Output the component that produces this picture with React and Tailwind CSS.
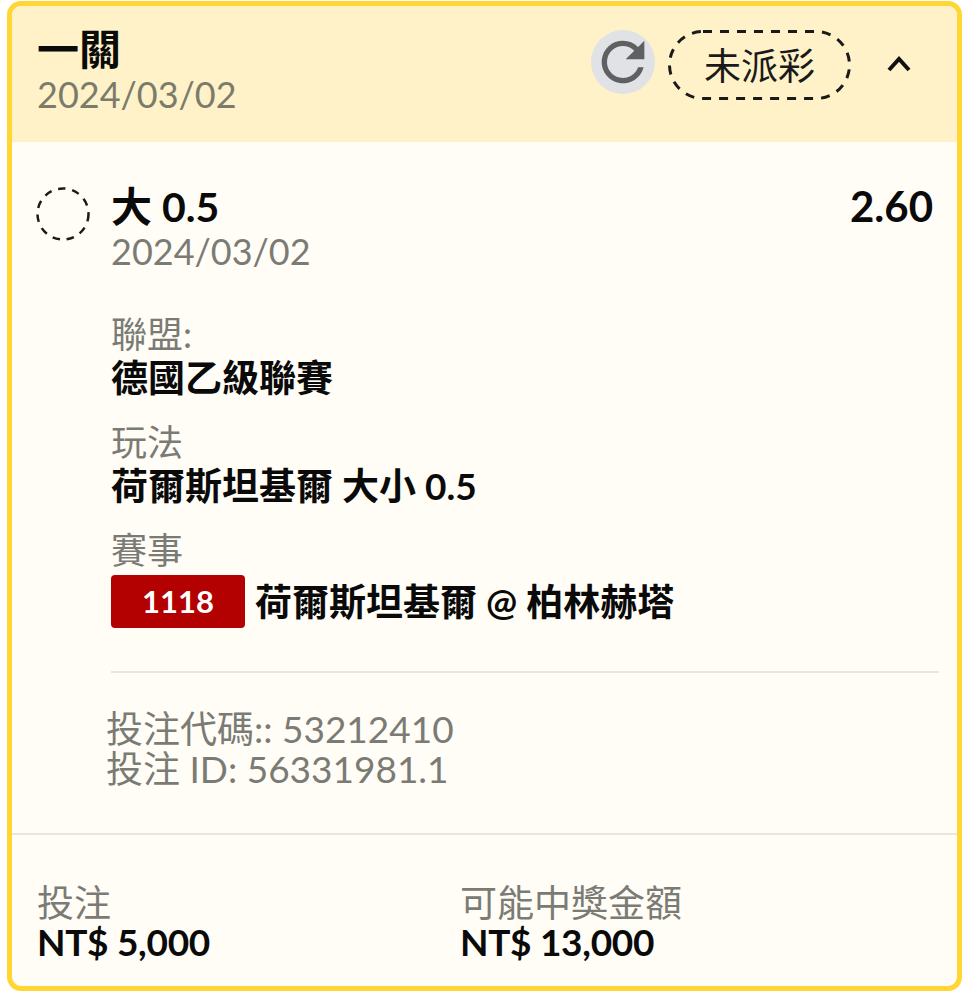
const font = "[font-family:Lato,'Noto_Sans_CJK_TC',sans-serif]"

function RefreshIcon() {
  return (
    <svg viewBox="0 0 24 24" className="w-[64px] h-[64px] fill-[#5f6061]">
      <path d="M17.65 6.35A7.96 7.96 0 0 0 12 4a8 8 0 1 0 7.74 10h-2.08A6 6 0 1 1 12 6c1.66 0 3.14.69 4.22 1.78L13 11h7V4l-2.35 2.35z" />
    </svg>
  )
}

function Chevron() {
  return (
    <svg viewBox="0 0 26 18" className="w-[26px] h-[18px] fill-none stroke-[#111] stroke-[4]">
      <path d="M3 16 L13 5 L23 16" />
    </svg>
  )
}

function Field({ label, value }) {
  return (
    <div>
      <div className="text-[36px] leading-[44px] text-[#7b7b75]">{label}</div>
      <div className="text-[37px] leading-[44px] font-bold text-[#0a0a0a]">{value}</div>
    </div>
  )
}

export default function App() {
  return (
    <div className={`w-[965px] h-[1000px] bg-white pt-[1px] pl-[7px] pr-[3px] ${font}`}>
      <div className="h-[990px] border-[5px] border-[#ffd633] rounded-[14px] bg-[#fffdf5] overflow-hidden flex flex-col">
        <div className="h-[136px] shrink-0 bg-[#fff2c8] flex justify-between pl-[25px] pr-[45px] pt-[21px]">
          <div>
            <div className="text-[42px] leading-[45px] font-bold text-[#0a0a0a]">一關</div>
            <div className="text-[36px] leading-[44px] text-[#7b7b6c]">2024/03/02</div>
          </div>
          <div className="flex items-start gap-[13px] pt-[3px]">
            <div className="w-[64px] h-[64px] rounded-full bg-[#e0e2e5] flex items-center justify-center">
              <RefreshIcon />
            </div>
            <div className="relative w-[183px] h-[70px] pt-[2px] flex items-center justify-center text-[37px] text-[#1a1a1a]">
              <svg viewBox="0 0 183 70" className="absolute inset-0 w-full h-full fill-none stroke-[#1a1a1a] stroke-[3]">
                <rect x="1.5" y="1.5" width="180" height="67" rx="33.5" strokeDasharray="9 8" />
              </svg>
              未派彩
            </div>
            <div className="pl-[22px] pt-[24px]">
              <Chevron />
            </div>
          </div>
        </div>

        <div className="flex-1 pt-[40px] flex flex-col">
          <div className="flex pl-[24px] pr-[24px]">
            <svg viewBox="0 0 54 54" className="w-[54px] h-[54px] mt-[5px] shrink-0 fill-none stroke-[#1a1a1a] stroke-[2.5]">
              <circle cx="27" cy="27" r="25.5" strokeDasharray="7.5 6.8" />
            </svg>
            <div className="flex-1 pl-[21px]">
              <div className="flex justify-between leading-[49px] font-bold text-[#0a0a0a]">
                <span className="text-[41px]">大 0.5</span>
                <span className="text-[42px]">2.60</span>
              </div>
              <div className="text-[36px] leading-[41px] text-[#7b7b75]">2024/03/02</div>
            </div>
          </div>

          <div className="pl-[99px] pr-[18px] pt-[40px] flex flex-col gap-[20px]">
            <Field label="聯盟:" value="德國乙級聯賽" />
            <Field label="玩法" value="荷爾斯坦基爾 大小 0.5" />
            <div>
              <div className="text-[36px] leading-[44px] text-[#7b7b75]">賽事</div>
              <div className="flex items-center gap-[10px] mt-[3px]">
                <span className="w-[134px] h-[53px] rounded-[4px] bg-[#b30000] text-white text-[31px] font-bold flex items-center justify-center">1118</span>
                <span className="text-[37px] leading-[53px] font-bold text-[#0a0a0a]">荷爾斯坦基爾 @ 柏林赫塔</span>
              </div>
            </div>
            <div className="border-t-2 border-[#e8e6df] mt-[23px]" />
          </div>

          <div className="pl-[94px] pt-[36px] text-[37px] leading-[40px] text-[#7b7b75]">
            <div>投注代碼:: 53212410</div>
            <div>投注 ID: 56331981.1</div>
          </div>

          <div className="border-t-2 border-[#e8e6df] mt-[44px]" />

          <div className="flex pl-[25px] pt-[48px]">
            <div className="w-[423px]">
              <div className="text-[37px] leading-[39px] text-[#7b7b75]">投注</div>
              <div className="text-[37px] leading-[40px] font-bold tracking-[-0.3px] text-[#0a0a0a]">NT$ 5,000</div>
            </div>
            <div>
              <div className="text-[37px] leading-[39px] text-[#7b7b75]">可能中獎金額</div>
              <div className="text-[37px] leading-[40px] font-bold tracking-[-0.3px] text-[#0a0a0a]">NT$ 13,000</div>
            </div>
          </div>
        </div>
      </div>
    </div>
  )
}
